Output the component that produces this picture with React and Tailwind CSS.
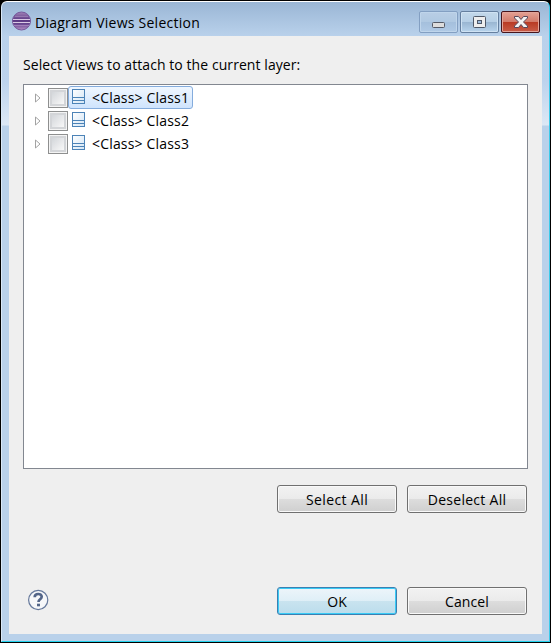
const textFont = "font-['Open_Sans','Noto_Sans',sans-serif]";

function EclipseIcon() {
  return (
    <svg width="20" height="20" viewBox="0 0 20 20" className="shrink-0">
      <defs>
        <linearGradient id="orb" x1="0" y1="0" x2="0" y2="1">
          <stop offset="0" stopColor="#a283b8" />
          <stop offset="0.45" stopColor="#5b3883" />
          <stop offset="0.65" stopColor="#65448e" />
          <stop offset="1" stopColor="#b58fc6" />
        </linearGradient>
      </defs>
      <circle cx="10.5" cy="10" r="9" fill="url(#orb)" stroke="#76579b" />
      <path d="M4 5.5h13" stroke="#a98fc0" strokeWidth=".6" />
      <path d="M2 8.5h17M2 11.5h17" stroke="#e6d9ee" strokeWidth=".9" />
      <path d="M3 14.5h15" stroke="#b899cb" strokeWidth=".6" />
    </svg>
  );
}

function ClassIcon() {
  return (
    <svg width="13" height="15" viewBox="0 0 13 15" className="mt-[2px] shrink-0 self-start">
      <defs>
        <linearGradient id="sheet" x1="0" y1="0" x2="1" y2="1">
          <stop offset="0" stopColor="#fff" />
          <stop offset="1" stopColor="#d3e5f5" />
        </linearGradient>
      </defs>
      <rect x=".5" y=".5" width="12" height="14" fill="url(#sheet)" stroke="#4c83b7" />
      <path d="M1 8.5h11M1 11.5h11" stroke="#4c83b7" />
    </svg>
  );
}

function TreeRow({ name, selected }) {
  return (
    <div className="flex h-[23px] items-center">
      <svg width="6" height="10" viewBox="0 0 6 10" className="ml-[11px] shrink-0">
        <path d="M.5 1v8L5 5z" fill="#fff" stroke="#a3a3a3" />
      </svg>
      <div className="mt-[2px] ml-[7px] flex size-5 shrink-0 items-center justify-center self-start border border-[#8e8f8f] bg-[#f4f4f4]">
        <div className="size-4 border-2 border-[#d3d5d8] bg-linear-to-br from-[#d3d6da] to-[#f8f8f8]" />
      </div>
      <div className={"flex h-[23px] w-[125px] items-center rounded-[3px] border pl-[3px] " + (selected ? "border-[#84acdd] bg-linear-to-b from-[#f0f7ff] to-[#cfe4fd]" : "border-transparent")}>
        <ClassIcon />
        <span className="ml-[7px] text-[14px] leading-5 tracking-[0.18px] whitespace-nowrap">{"<Class> " + name}</span>
      </div>
    </div>
  );
}

function Button({ children, primary, tracking = "" }) {
  return (
    <button className={"flex h-7 w-[120px] items-center justify-center rounded-[3px] border pt-px text-[14px] leading-5 " + tracking + " " + (primary
      ? "border-[#3c7fb1] bg-[linear-gradient(#edf5fa_0%,#dfeff7_48%,#c9e3ef_50%,#bbddec_100%)] shadow-[inset_0_0_0_1px_#39cbf6]"
      : "border-[#707070] bg-[linear-gradient(#f2f2f2_0%,#ebebeb_48%,#dddddd_50%,#cfcfcf_100%)] shadow-[inset_0_0_0_1px_#f9f9f9]")}>
      {children}
    </button>
  );
}

export default function App() {
  return (
    <div className={"flex h-[643px] w-[551px] bg-black p-px text-black " + textFont}>
      <div className="flex flex-1 flex-col rounded-t-[6px] border border-t-white border-r-[#3ccbea] border-b-[#22d3ee] border-l-[#d9e8f7] bg-[linear-gradient(#9ab6d5_0px,#b9d1eb_34px,#bdd3ed_80px,#dce8f5_123px,#b9d1ea_124px)] px-[7px] pb-[7px]">
        <header className="flex h-[34px] shrink-0 items-start">
          <div className="mt-[9px] ml-[2px]"><EclipseIcon /></div>
          <span className="mt-[11px] ml-[4px] text-[14px] leading-5 tracking-[0.25px]">Diagram Views Selection</span>
          <div className="mt-[9px] mr-[2px] ml-auto flex gap-[2px]">
            <div className="h-[22px] w-[39px] rounded-[2px] border border-[#839fc2] bg-[linear-gradient(#b9cee5_0%,#b0c9e2_48%,#a4bfdc_50%,#b0cae6_100%)] shadow-[inset_0_0_0_1px_#bfd5eb]">
              <svg width="37" height="20"><rect x="12.5" y="10.5" width="12" height="5" rx="1" fill="#ddd" stroke="#555a66" /></svg>
            </div>
            <div className="h-[22px] w-[39px] rounded-[2px] border border-[#657f9f] bg-[linear-gradient(#c3d8ea_0%,#b6cfe6_48%,#99b5d1_50%,#b8d4ed_100%)] shadow-[inset_0_0_0_1px_#cfe2f3]">
              <svg width="37" height="20">
                <rect x="12.5" y="4.5" width="12" height="11" rx="1" fill="#eee" stroke="#4f5867" />
                <rect x="16.5" y="8.5" width="4" height="3" fill="#9dbbdc" stroke="#4f5867" />
              </svg>
            </div>
            <div className="h-[22px] w-[39px] rounded-[2px] border border-[#47151c] bg-[linear-gradient(#e4a295_0%,#d27b6b_48%,#b83923_50%,#c95d49_100%)] shadow-[inset_0_0_0_1px_#e3a59a]">
              <svg width="37" height="20">
                <path d="M12.5 4.5h4l2.5 3 2.5-3h4v1.5L21.5 10l4 4v1.5h-4l-2.5-3-2.5 3h-4V14l4-4-4-4z" fill="#f3f3f3" stroke="#57485a" strokeLinejoin="round" />
              </svg>
            </div>
          </div>
        </header>
        <main className="flex flex-1 flex-col bg-[#efefef] pr-[14px] pl-[14px]">
          <p className="mt-[19px] h-5 text-[14px] leading-5 tracking-[0.07px] whitespace-nowrap">Select Views to attach to the current layer:</p>
          <div className="mt-[9px] h-[385px] w-[505px] shrink-0 border border-[#828790] bg-white pt-px">
            <TreeRow name="Class1" selected />
            <TreeRow name="Class2" />
            <TreeRow name="Class3" />
          </div>
          <div className="mt-4 flex justify-end gap-[10px] pr-px">
            <Button tracking="tracking-[0.4px]">Select All</Button>
            <Button tracking="tracking-[0.28px]">Deselect All</Button>
          </div>
          <div className="mt-[74px] flex items-center justify-end gap-[10px] pr-px">
            <svg width="22" height="22" viewBox="0 0 22 22" className="mr-auto mb-[2px] ml-1">
              <circle cx="11.2" cy="11" r="9.6" fill="#f6f7f9" stroke="#65789b" strokeWidth="1.2" />
              <path d="M7.7 8.2c0-4.2 7-4.2 7-.4 0 2.6-3.2 2.4-3.2 5.2" fill="none" stroke="#536588" strokeWidth="2.7" />
              <path d="M10 14.7h3v2.6h-3z" fill="#536588" />
            </svg>
            <Button primary>OK</Button>
            <Button tracking="tracking-[0.1px]">Cancel</Button>
          </div>
        </main>
      </div>
    </div>
  );
}
